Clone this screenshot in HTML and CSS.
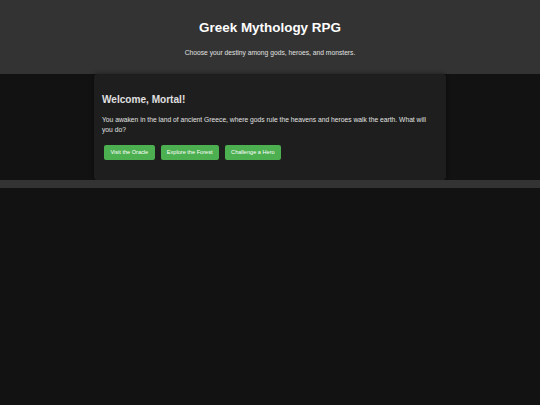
FILE: index.html
```html
<!DOCTYPE html>
<html lang="en">
<head>
<meta charset="utf-8">
<title>Greek Mythology RPG</title>
<link rel="stylesheet" href="styles.css">
</head>
<body>
<header class="site-header">
  <h1 class="site-title">Greek Mythology RPG</h1>
  <p class="site-subtitle">Choose your destiny among gods, heroes, and monsters.</p>
</header>
<main class="story-card">
  <h2 class="story-title">Welcome, Mortal!</h2>
  <p class="story-text">You awaken in the land of ancient Greece, where gods rule the heavens and heroes walk the earth. What will you do?</p>
  <div class="actions">
    <button class="action-btn" type="button">Visit the Oracle</button>
    <button class="action-btn" type="button">Explore the Forest</button>
    <button class="action-btn" type="button">Challenge a Hero</button>
  </div>
</main>
<footer class="site-footer"></footer>
</body>
</html>
```
FILE: styles.css
```css
html, body {
  margin: 0;
  padding: 0;
}
body {
  background: #121212;
  color: #e0e0e0;
  font-family: "Liberation Sans", Arial, sans-serif;
}
.site-header {
  background: #333333;
  text-align: center;
  padding: 20px 0 17px;
}
.site-title {
  margin: 0;
  font-size: 13.44px;
  line-height: 15.45px;
  font-weight: bold;
  color: #ffffff;
}
.site-subtitle {
  margin: 13.9px 0 0;
  font-size: 6.72px;
  line-height: 7.7px;
  color: #e0e0e0;
}
.story-card {
  box-sizing: border-box;
  width: 352.8px;
  margin: 0 auto;
  padding: 8.4px 8.4px 20.3px;
  background: #1e1e1e;
  border-radius: 3.4px;
  box-shadow: 0 0 4px rgba(0, 0, 0, 0.5);
}
.story-title {
  margin: 11.2px 0 0;
  font-size: 10.08px;
  line-height: 11.6px;
  font-weight: bold;
  color: #e0e0e0;
}
.story-text {
  margin: 10.1px 0 0;
  font-size: 6.72px;
  line-height: 10.08px;
  color: #e0e0e0;
}
.actions {
  display: flex;
  gap: 6px;
  margin-top: 9.8px;
  padding-left: 2.1px;
}
.action-btn {
  font-family: "Liberation Sans", Arial, sans-serif;
  font-size: 5.6px;
  line-height: 6.4px;
  padding: 4px 6.3px;
  margin: 0;
  border: none;
  border-radius: 2.1px;
  background: #4caf50;
  color: #ffffff;
  cursor: pointer;
}
.site-footer {
  background: #333333;
  height: 8.4px;
}
```
